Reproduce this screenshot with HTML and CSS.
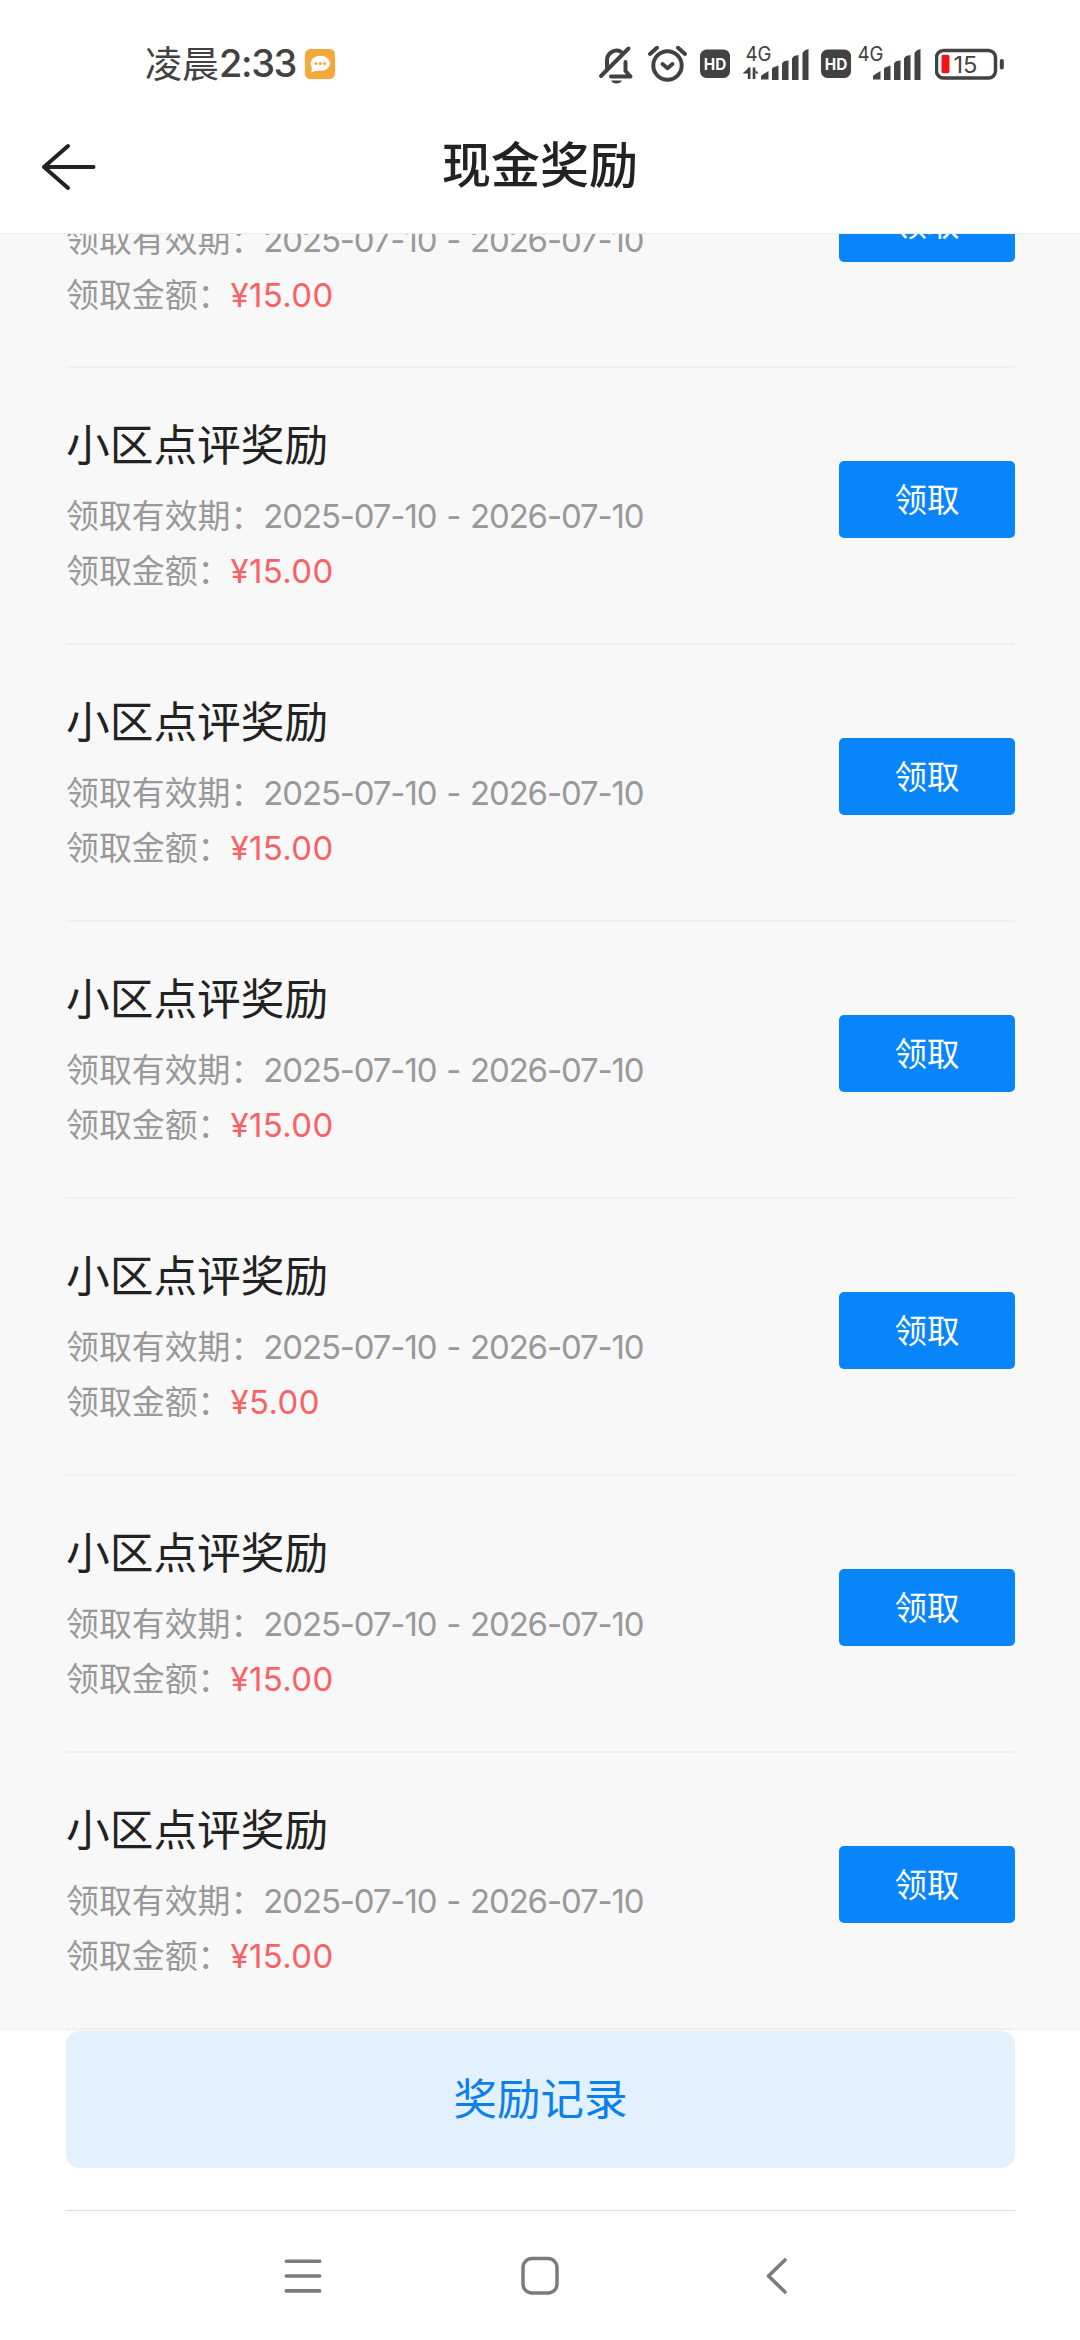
FILE: index.html
```html
<!DOCTYPE html>
<html lang="zh-CN">
<head>
<meta charset="utf-8">
<title>现金奖励</title>
<link rel="stylesheet" href="styles.css">
</head>
<body>
<div class="screen">
  <div class="status">
    <span class="clock"><span class="clock-cn">凌晨</span><span class="clock-num">2:33</span></span>
    <svg class="msg" width="30" height="30" viewBox="0 0 30 30"><rect width="30" height="30" rx="5.5" fill="#f6a93b"/><ellipse cx="15.3" cy="14.4" rx="9.8" ry="7.7" fill="#fff"/><path d="M7 16l-.5 7.2 7-2z" fill="#fff"/><g fill="#f6a93b"><circle cx="11" cy="14.5" r="1.5"/><circle cx="15.3" cy="14.5" r="1.5"/><circle cx="19.6" cy="14.5" r="1.5"/></g></svg>
    <div class="status-icons">
      <svg class="ic-bell" width="36" height="40" viewBox="598 45 36 40" fill="none" stroke="#424242" stroke-width="4" stroke-linecap="round" stroke-linejoin="round"><path d="M607 69V60a9.5 9.5 0 0 1 14-8.2M625.5 62v9l5 5.500H611M601 76l27.500-27.500"/><path d="M611 80.500h11q-1.500 3-5.500 3t-5.500-3z" fill="#424242" stroke="none"/></svg>
      <svg class="ic-alarm" width="40" height="40" viewBox="648 45 40 40" fill="none" stroke="#424242" stroke-width="4" stroke-linecap="round" stroke-linejoin="round"><circle cx="667.500" cy="65.500" r="14.200"/><path d="M650 54l7-6.200M685 54l-7-6.200"/><path d="M662.500 64l5 4.200 5-4.200"/></svg>
      <svg class="ic-hd" width="30" height="40" viewBox="0 45 30 40"><rect y="49.500" width="30" height="28.500" rx="6.500" fill="#424242"/><text class="hd-text" x="15" y="69.700" textLength="22.500" lengthAdjust="spacingAndGlyphs">HD</text></svg>
      <svg class="ic-sig-a" width="68" height="50" viewBox="742 35 68 50" fill="#424242"><text class="net-text" x="745.500" y="60.500" textLength="26" lengthAdjust="spacingAndGlyphs">4G</text><path d="M747.800 67.500h2.700v11.500h-2.700zM742.500 73.500l5.500-5v5zM752.700 67.500h2.700v11.500h-2.700zM755 73.500h3.500l-3.500-4.500z"/><path d="M761 79.500v-3q0-1 1-1.500l6.500-4v8.500zM772 80V69q0-1 1-1.500l5.500-2V80zM782 80V63.500l2-2.200 4.500-1V80zM792 80V58.500l2-2.500 4.500-1V80zM802.500 80V53l2-2.500 4-1.500V80z"/></svg>
      <svg class="ic-hd2" width="30" height="40" viewBox="0 45 30 40"><rect y="49.500" width="30" height="28.500" rx="6.500" fill="#424242"/><text class="hd-text" x="15" y="69.700" textLength="22.500" lengthAdjust="spacingAndGlyphs">HD</text></svg>
      <svg class="ic-sig-b" width="66" height="50" viewBox="855 35 66 50" fill="#424242"><text class="net-text" x="857.500" y="60.500" textLength="26" lengthAdjust="spacingAndGlyphs">4G</text><path transform="translate(112 0)" d="M761 79.500v-3q0-1 1-1.500l6.500-4v8.500zM772 80V69q0-1 1-1.500l5.500-2V80zM782 80V63.500l2-2.200 4.500-1V80zM792 80V58.500l2-2.500 4.500-1V80zM802.500 80V53l2-2.500 4-1.500V80z"/></svg>
      <svg class="ic-bat" width="70" height="40" viewBox="935 45 70 40"><rect x="936.500" y="50.500" width="59" height="27.500" rx="7" fill="#fff" stroke="#424242" stroke-width="3.500"/><rect x="999.800" y="59" width="4" height="10.500" rx="2" fill="#424242"/><rect x="941.500" y="54.800" width="8" height="18.500" rx="2" fill="#f2121b"/><text class="bat-text" x="953.500" y="73" textLength="24" lengthAdjust="spacingAndGlyphs">15</text></svg>
    </div>
  </div>
  <header class="header">
    <svg class="back" width="60" height="60" viewBox="0 0 60 60" fill="none" stroke="#222" stroke-width="4" stroke-linecap="round" stroke-linejoin="round"><path d="M28 9L4 30l24 21M4 30h49.500"/></svg>
    <h1 class="title">现金奖励</h1>
  </header>
  <main class="list">
    <section class="item"><div class="info"><h2 class="name">小区点评奖励</h2><p class="line">领取有效期：<span class="date">2025-07-10 - 2026-07-10</span></p><p class="line">领取金额：<span class="money">¥15.00</span></p></div><button class="claim">领取</button></section>
    <section class="item"><div class="info"><h2 class="name">小区点评奖励</h2><p class="line">领取有效期：<span class="date">2025-07-10 - 2026-07-10</span></p><p class="line">领取金额：<span class="money">¥15.00</span></p></div><button class="claim">领取</button></section>
    <section class="item"><div class="info"><h2 class="name">小区点评奖励</h2><p class="line">领取有效期：<span class="date">2025-07-10 - 2026-07-10</span></p><p class="line">领取金额：<span class="money">¥15.00</span></p></div><button class="claim">领取</button></section>
    <section class="item"><div class="info"><h2 class="name">小区点评奖励</h2><p class="line">领取有效期：<span class="date">2025-07-10 - 2026-07-10</span></p><p class="line">领取金额：<span class="money">¥15.00</span></p></div><button class="claim">领取</button></section>
    <section class="item"><div class="info"><h2 class="name">小区点评奖励</h2><p class="line">领取有效期：<span class="date">2025-07-10 - 2026-07-10</span></p><p class="line">领取金额：<span class="money">¥5.00</span></p></div><button class="claim">领取</button></section>
    <section class="item"><div class="info"><h2 class="name">小区点评奖励</h2><p class="line">领取有效期：<span class="date">2025-07-10 - 2026-07-10</span></p><p class="line">领取金额：<span class="money">¥15.00</span></p></div><button class="claim">领取</button></section>
    <section class="item"><div class="info"><h2 class="name">小区点评奖励</h2><p class="line">领取有效期：<span class="date">2025-07-10 - 2026-07-10</span></p><p class="line">领取金额：<span class="money">¥15.00</span></p></div><button class="claim">领取</button></section>
  </main>
  <footer class="footer"><button class="record">奖励记录</button></footer>
  <nav class="nav">
    <svg width="40" height="40" viewBox="0 0 40 40" fill="none" stroke="#7b7b7b" stroke-width="3.600" stroke-linecap="round"><path d="M3.300 5.200h33.400M3.300 20h33.400M3.300 34.900h33.400"/></svg>
    <svg width="40" height="40" viewBox="0 0 40 40" fill="none" stroke="#7b7b7b" stroke-width="3.500"><rect x="3" y="2.500" width="34" height="34.500" rx="9"/></svg>
    <svg width="40" height="40" viewBox="0 0 40 40" fill="none" stroke="#7b7b7b" stroke-width="3.600" stroke-linecap="round" stroke-linejoin="round"><path d="M28 4L11.500 20 28 36"/></svg>
  </nav>
</div>
</body>
</html>
```
FILE: styles.css
```css
* { box-sizing: border-box; }
html, body, h1, h2, p { margin: 0; padding: 0; }
body {
  background: #fff;
  font-family: "Noto Sans CJK SC", sans-serif;
}
button {
  border: 0;
  padding: 0;
  font-family: inherit;
}
svg { display: block; flex: none; }
.screen {
  width: 1080px;
  height: 2340px;
  overflow: hidden;
  display: flex;
  flex-direction: column;
  background: #fff;
}
.status {
  height: 100px;
  flex: none;
  display: flex;
  align-items: flex-start;
  padding-left: 145px;
}
.clock {
  display: flex;
  width: 150px;
  margin-top: 43px;
  line-height: 38px;
  white-space: nowrap;
  color: #424242;
}
.clock-cn { font-size: 37px; width: 74px; }
.clock-num { font: 450 38px/41px Inter, sans-serif; letter-spacing: -1.4px; }
.msg { margin: 49px 0 0 10px; }
.status-icons {
  display: flex;
  margin-left: 263px;
  padding-top: 45px;
}
.ic-alarm { margin-left: 14px; }
.ic-hd { margin-left: 12px; }
.ic-sig-a { margin: -10px 0 0 12px; }
.ic-hd2 { margin-left: 11px; }
.ic-sig-b { margin: -10px 0 0 4px; }
.ic-bat { margin-left: 14px; }
.hd-text {
  font: 700 16px Inter, sans-serif;
  fill: #fff;
  text-anchor: middle;
}
.net-text { font: 400 20.5px Inter, sans-serif; fill: #424242; }
.bat-text { font: 400 22.5px Inter, sans-serif; fill: #424242; }
.header {
  height: 134px;
  flex: none;
  display: grid;
  grid-template-columns: 120px 1fr 120px;
  align-items: center;
  border-bottom: 1px solid #ededed;
}
.back { margin-left: 40px; }
.title {
  grid-column: 2;
  text-align: center;
  font-size: 49px;
  font-weight: 500;
  line-height: 60px;
  color: #222;
  margin-top: -9px;
}
.list {
  height: 1797px;
  flex: none;
  overflow: hidden;
  background: #f8f8f8;
  padding: 0 65px 0 66px;
}
.item {
  height: 276.85px;
  display: flex;
  justify-content: space-between;
  align-items: flex-start;
  border-bottom: 2px solid #efefef;
}
.item:first-child { margin-top: -142.4px; }
.info { padding-top: 44px; }
.name {
  font-size: 43.7px;
  font-weight: 400;
  line-height: 60px;
  color: #222;
}
.line {
  height: 55px;
  font-size: 32.9px;
  line-height: 55px;
  color: #999;
  white-space: nowrap;
}
.name + .line { margin-top: 14px; }
.date, .money { font-family: Inter, sans-serif; line-height: 1; }
.date { letter-spacing: -1.1px; word-spacing: 1.7px; }
.money { color: #fa6167; letter-spacing: 0.4px; }
.claim {
  width: 176px;
  height: 77px;
  margin-top: 93px;
  border-radius: 5px;
  background: #0985fb;
  color: #fff;
  font-size: 32.5px;
  line-height: 74px;
  padding-bottom: 3px;
}
.footer {
  height: 180px;
  flex: none;
  margin: 0 65px 0 66px;
  border-bottom: 1px solid #dfdfdf;
}
.record {
  display: block;
  width: 100%;
  height: 137px;
  border-radius: 14px;
  background: #e3f0fd;
  color: #0b80ed;
  font-size: 43.5px;
  line-height: 131px;
  padding-bottom: 6px;
}
.nav {
  flex: 1;
  display: flex;
  justify-content: space-between;
  align-items: flex-start;
  padding: 44.5px 283px 0;
}
```
